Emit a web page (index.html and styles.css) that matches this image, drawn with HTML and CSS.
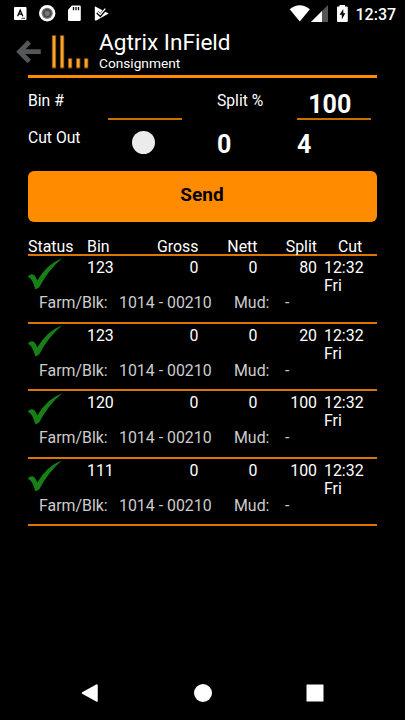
FILE: index.html
```html
<!DOCTYPE html>
<html lang="en">
<head>
<meta charset="utf-8">
<title>Agtrix InField</title>
<link rel="stylesheet" href="styles.css">
</head>
<body>
<div class="statusbar">
  <svg class="notifications" width="120" height="27" viewBox="0 0 120 27">
    <rect x="14" y="7" width="12.5" height="13" rx="1" fill="#fff"/>
    <path d="M17.6 16.2 20.2 10.2 22.8 16.2M18.5 14.2h3.4" fill="none" stroke="#000" stroke-width="1.3"/>
    <path d="M21.5 18.3h3.5" stroke="#000" stroke-width=".8"/>
    <circle cx="47.2" cy="13.3" r="8.2" fill="#fff"/>
    <circle cx="47.2" cy="13.3" r="5.6" fill="#777"/>
    <circle cx="47.2" cy="13.3" r="4.2" fill="#444"/>
    <circle cx="47.2" cy="13.3" r="2.6" fill="#777"/>
    <path d="M72 5.5h7.5q1.3 0 1.3 1.3v12.7q0 1.5-1.3 1.5H69.300q-1.300 0-1.300-1.500V9.800z" fill="#fff"/>
    <path d="M73.500 7v3.200M76 7v3.200M78.500 7v3.200" stroke="#000" stroke-width="1.300"/>
    <path d="M94.800 6.300 108.700 13.600 95.800 20.700 94.800 20z" fill="#fff"/>
    <path d="M97.300 12.300 100.300 15.200 107 7.500" fill="none" stroke="#000" stroke-width="3"/>
    <path d="M97.500 12 100.300 14.600 105.300 8.700" fill="none" stroke="#fff" stroke-width="1.300"/>
  </svg>
  <svg class="signals" width="66" height="27" viewBox="285 0 66 27">
    <path d="M289.700 9.200Q299.700 1.300 309.900 9.200L299.800 21.500z" fill="#fff"/>
    <path d="M328 5v17H311z" fill="#555"/>
    <path d="M322 11v11H311z" fill="#fff"/>
    <path d="M339.500 5h5.500v1.500h1.800q1 0 1 1V21q0 1-1 1H338q-1 0-1-1V7.500q0-1 1-1h1.500z" fill="#fff"/>
    <path d="M343.300 9 339.500 14.800H341.800V19.500L345.300 13.200H343.300z" fill="#000"/>
  </svg>
  <span class="clock">12:37</span>
</div>
<main>
  <header class="appbar">
    <svg class="brand" width="76" height="47" viewBox="16 28 76 47">
      <path d="M40.800 51.700H20M29.300 42 19.600 51.700 29.300 61.500" fill="none" stroke="#555657" stroke-width="4.800"/>
      <g fill="none" stroke="#6b3d04" stroke-width="4.400"><path d="M54 35v33.500M62.100 35v33.500M70.100 58v10.500M78.200 58v10.500M86.200 58v10.500"/></g>
      <g fill="none" stroke="#f7a32c" stroke-width="2.800"><path d="M54 36v31.500M62.100 36v31.500M70.100 59v8.500M78.200 59v8.500M86.200 59v8.500"/></g>
    </svg>
    <div class="titles">
      <h1>Agtrix InField</h1>
      <p>Consignment</p>
    </div>
  </header>
  <section class="form">
    <span class="label">Bin #</span><span class="field"></span>
    <span class="label">Split %</span><span class="field">100</span>
    <span class="label cutout">Cut Out</span><span class="toggle"></span>
    <strong class="count">0</strong><strong class="count">4</strong>
  </section>
  <button class="send">Send</button>
  <section class="list">
    <div class="cols head"><span>Status</span><span>Bin</span><span class="num">Gross</span><span class="num">Nett</span><span class="num">Split</span><span class="cuthead">Cut</span></div>
    <article class="row">
      <div class="cols"><svg class="check" width="36" height="34" viewBox="0 0 36 34"><path d="M0 18Q3.500 15 6.300 17.200 8 18.500 9.300 22.500 19 6 34.300 .3 21 11 11.300 29.200 9.300 30.600 7.500 31.500 4 20 .8 19.500z"/></svg><span>123</span><span class="num">0</span><span class="num">0</span><span class="num">80</span><span class="cut">12:32 Fri</span></div>
      <div class="detail"><span>Farm/Blk:</span><span>1014 - 00210</span><span>Mud:</span><span>-</span></div>
    </article>
    <article class="row">
      <div class="cols"><svg class="check" width="36" height="34" viewBox="0 0 36 34"><path d="M0 18Q3.500 15 6.300 17.200 8 18.500 9.300 22.500 19 6 34.300 .3 21 11 11.300 29.200 9.300 30.600 7.500 31.500 4 20 .8 19.500z"/></svg><span>123</span><span class="num">0</span><span class="num">0</span><span class="num">20</span><span class="cut">12:32 Fri</span></div>
      <div class="detail"><span>Farm/Blk:</span><span>1014 - 00210</span><span>Mud:</span><span>-</span></div>
    </article>
    <article class="row">
      <div class="cols"><svg class="check" width="36" height="34" viewBox="0 0 36 34"><path d="M0 18Q3.500 15 6.300 17.200 8 18.500 9.300 22.500 19 6 34.300 .3 21 11 11.300 29.200 9.300 30.600 7.500 31.500 4 20 .8 19.500z"/></svg><span>120</span><span class="num">0</span><span class="num">0</span><span class="num">100</span><span class="cut">12:32 Fri</span></div>
      <div class="detail"><span>Farm/Blk:</span><span>1014 - 00210</span><span>Mud:</span><span>-</span></div>
    </article>
    <article class="row">
      <div class="cols"><svg class="check" width="36" height="34" viewBox="0 0 36 34"><path d="M0 18Q3.500 15 6.300 17.200 8 18.500 9.300 22.500 19 6 34.300 .3 21 11 11.300 29.200 9.300 30.600 7.500 31.500 4 20 .8 19.500z"/></svg><span>111</span><span class="num">0</span><span class="num">0</span><span class="num">100</span><span class="cut">12:32 Fri</span></div>
      <div class="detail"><span>Farm/Blk:</span><span>1014 - 00210</span><span>Mud:</span><span>-</span></div>
    </article>
  </section>
</main>
<nav class="navbar">
  <svg width="20" height="20" viewBox="0 0 20 20"><path d="M2.500 10 17 2V18z" stroke-width="1.500" stroke-linejoin="round"/></svg>
  <svg width="20" height="20" viewBox="0 0 20 20"><circle cx="10" cy="10" r="9"/></svg>
  <svg width="20" height="20" viewBox="0 0 20 20"><rect x="1.500" y="1.500" width="17" height="17" rx=".5"/></svg>
</nav>
</body>
</html>
```
FILE: styles.css
```css
* { box-sizing: border-box; }
body {
  margin: 0;
  height: 720px;
  display: flex;
  flex-direction: column;
  background: #000;
  color: #fff;
  font: 15.900px/18px Roboto, sans-serif;
  overflow: hidden;
}
h1, p { margin: 0; font-weight: 400; }
svg { display: block; }
.statusbar { display: flex; height: 28px; }
.signals { margin-left: 165px; }
.clock { margin-left: 4.500px; font-size: 16px; font-weight: 500; line-height: 29px; }
main { flex: 1; padding: 0 28px; }
.appbar { display: flex; height: 49.500px; border-bottom: 3px solid #ff8c00; }
.brand { flex: none; margin-left: -12px; }
.titles { padding: 2px 0 0 7px; }
h1 { font-size: 22.600px; line-height: 26px; white-space: nowrap; }
.titles p { font-size: 13.700px; line-height: 15px; }
.form {
  display: grid;
  grid-template-columns: 80px 109px 80px 74px;
  grid-template-rows: 42px 51.500px;
}
.label { padding-top: 14.500px; font-size: 15.700px; white-space: nowrap; }
.label.cutout { padding-top: 9.500px; }
.field {
  width: 73.500px;
  height: 42px;
  padding: 15px 8px 0 0;
  border-bottom: 2px solid #c97000;
  font-size: 25px;
  font-weight: 700;
  line-height: 24px;
  text-align: center;
}
.toggle { width: 23px; height: 23px; margin: 11.500px 0 0 24.300px; border-radius: 50%; background: #ebebeb; }
.count { padding-top: 13.500px; font-size: 25px; line-height: 24px; }
.send {
  display: block;
  width: 349px;
  height: 51px;
  padding: 0 1px 4px 0;
  border: 0;
  border-radius: 6px;
  background: #ff8c00;
  color: #000;
  font: 700 19px/24px Roboto, sans-serif;
}
.list { padding-top: 15px; }
.cols { display: grid; grid-template-columns: 59px 55.500px 56px 59px 59.500px 60px; }
.num { text-align: right; }
.head { height: 19px; border-bottom: 2px solid #d97700; line-height: 19px; }
.cuthead { padding-left: 21px; }
.cut { padding-left: 7px; padding-right: 8px; }
.row { height: 67.500px; padding-top: 3px; border-bottom: 2px solid #d97700; }
.row .cols { height: 36px; }
.check { margin-top: -1.500px; fill: #168016; }
.detail { display: grid; grid-template-columns: 80px 115px 51px auto; padding-left: 11px; color: #ccc; line-height: 16px; }
.navbar { display: flex; gap: 92.500px; height: 54px; padding: 17px 0 0 80px; fill: #fff; stroke: #fff; stroke-width: 0; }
```
